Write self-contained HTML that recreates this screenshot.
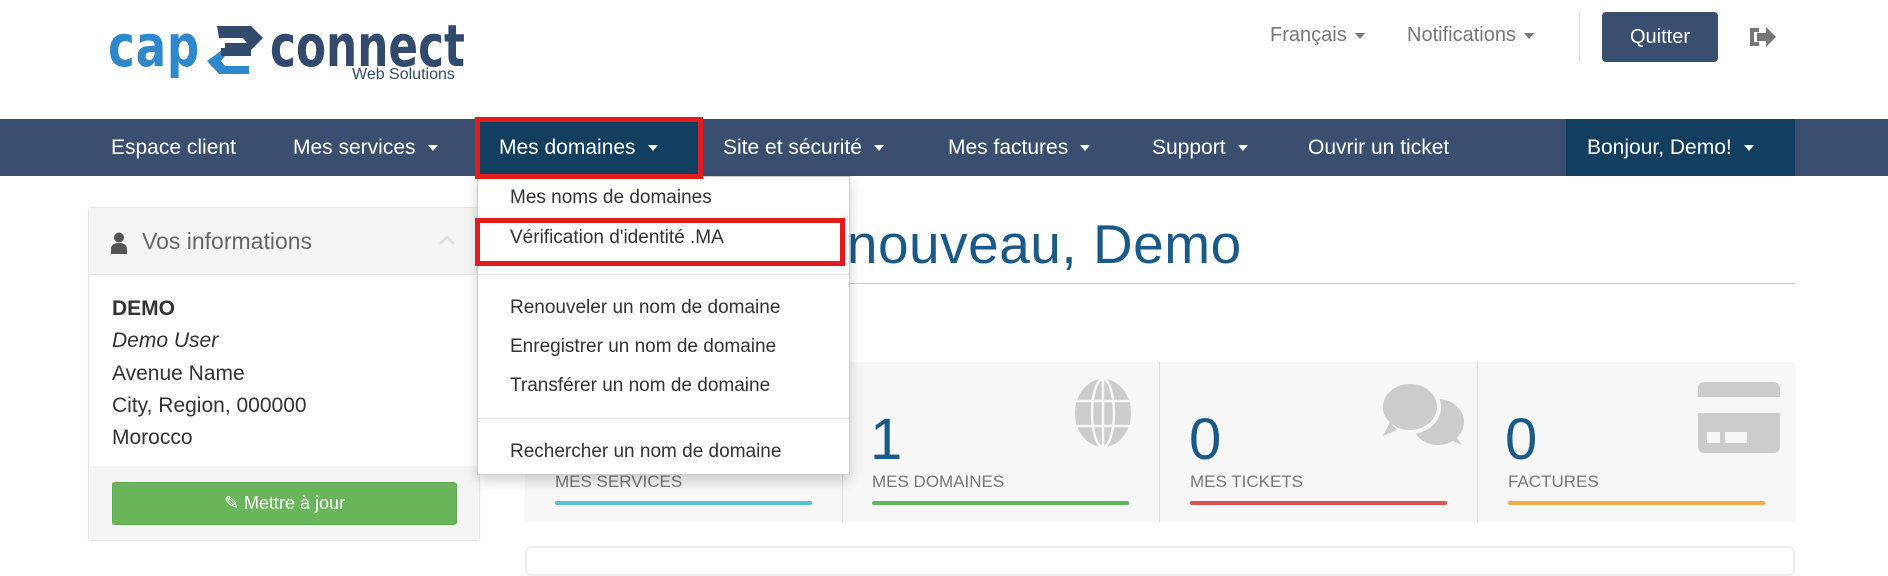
<!DOCTYPE html>
<html><head><meta charset="utf-8"><style>
*{margin:0;padding:0;box-sizing:border-box}
body{width:1888px;height:561px;overflow:hidden;background:#fff;font-family:"Liberation Sans",sans-serif;position:relative}
.a{position:absolute;white-space:nowrap}
.nav{position:absolute;left:0;top:119px;width:1888px;height:57px;background:#3a4e6f}
.ni{position:absolute;top:0;height:57px;line-height:57px;color:#fff;font-size:21px}
.car{display:inline-block;width:0;height:0;border-left:5px solid transparent;border-right:5px solid transparent;border-top:6px solid #fff;vertical-align:middle;margin-left:12px}
.dd{position:absolute;left:477px;top:176px;width:373px;height:299px;background:#fff;border:1px solid #ccc;box-shadow:0 6px 12px rgba(0,0,0,.18);z-index:5}
.dd div{position:absolute;left:32px;font-size:19px;color:#333;white-space:nowrap}
.lab{position:absolute;top:472px;font-size:17px;color:#777}
.bar{position:absolute;top:501px;height:4px;width:257px;border-radius:2px}
.num{position:absolute;top:411px;font-size:58px;color:#1a5a8a;line-height:1}
</style></head><body>
<!-- logo -->
<div class="a" style="left:108px;top:12px;font-size:58px;font-weight:bold;color:#2f88cc;letter-spacing:1px;font-family:'DejaVu Sans',sans-serif;transform:scaleX(0.78);transform-origin:left">cap</div>
<svg class="a" style="left:203px;top:24px" width="60" height="55" viewBox="0 0 60 55"><path d="M14 2h34l12 12-12 12H22v-7h22l-4-5H16z" fill="#324a6e"/><path d="M22 24h26v8H22l-4 5 4 5h24v8H16L4 37z" fill="#2f88cc"/><path d="M18 24h30v8H18z" fill="#324a6e"/></svg>
<div class="a" style="left:270px;top:12px;font-size:58px;font-weight:bold;color:#324a6e;font-family:'DejaVu Sans',sans-serif;transform:scaleX(0.755);transform-origin:left">connect</div>
<div class="a" style="left:352px;top:66px;font-size:16px;color:#324a6e">Web Solutions</div>
<!-- top right -->
<div class="a" style="left:1270px;top:24px;font-size:20px;color:#777">Français<span class="car" style="border-top-color:#777;margin-left:8px"></span></div>
<div class="a" style="left:1407px;top:24px;font-size:20px;color:#777">Notifications<span class="car" style="border-top-color:#777;margin-left:8px"></span></div>
<div class="a" style="left:1579px;top:12px;width:1px;height:50px;background:#ddd"></div>
<div class="a" style="left:1602px;top:12px;width:116px;height:50px;background:#3a4e6f;border-radius:4px;color:#fff;font-size:20px;line-height:50px;text-align:center">Quitter</div>
<svg class="a" style="left:1748px;top:25px" width="30" height="24" viewBox="0 0 30 24"><path d="M2 3h9v4H6v10h5v4H2z" fill="#777"/><path d="M9 8h9V2l10 10-10 10v-6H9z" fill="#777"/></svg>
<!-- nav -->
<div class="nav">
<div class="ni" style="left:111px">Espace client</div>
<div class="ni" style="left:293px">Mes services<span class="car"></span></div>
<div class="ni" style="left:479px;width:221px;background:#123f60"></div>
<div class="ni" style="left:499px">Mes domaines<span class="car"></span></div>
<div class="ni" style="left:723px">Site et sécurité<span class="car"></span></div>
<div class="ni" style="left:948px">Mes factures<span class="car"></span></div>
<div class="ni" style="left:1152px">Support<span class="car"></span></div>
<div class="ni" style="left:1308px">Ouvrir un ticket</div>
<div class="ni" style="left:1566px;width:229px;background:#123f60"></div>
<div class="ni" style="left:1587px">Bonjour, Demo!<span class="car"></span></div>
</div>
<div class="a" style="left:475px;top:117px;width:228px;height:62px;border:5px solid #e31b1b;z-index:6"></div>
<!-- left panel -->
<div class="a" style="left:88px;top:207px;width:392px;height:334px;background:#fff;border:1px solid #e6e6e6;border-radius:3px;box-shadow:0 1px 2px rgba(0,0,0,.05)">
<div style="height:67px;background:#f5f5f5;border-bottom:1px solid #e6e6e6"></div>
<div style="position:absolute;left:0;right:0;bottom:0;height:74px;background:#f5f5f5"></div>
</div>
<svg class="a" style="left:111px;top:232px" width="16" height="22" viewBox="0 0 16 22"><circle cx="8" cy="5.5" r="5" fill="#555"/><path d="M0 22v-5c0-4 3-6 8-6s8 2 8 6v5z" fill="#555"/></svg>
<div class="a" style="left:142px;top:228px;font-size:23px;color:#666">Vos informations</div>
<svg class="a" style="left:438px;top:234px" width="18" height="11" viewBox="0 0 18 11"><path d="M2 10l7-7 7 7" fill="none" stroke="#ddd" stroke-width="2.5"/></svg>
<div class="a" style="left:112px;top:293px;font-size:21px;line-height:32.3px;color:#333">
<b>DEMO</b><br><i>Demo User</i><br>Avenue Name<br>City, Region, 000000<br>Morocco</div>
<div class="a" style="left:112px;top:482px;width:345px;height:43px;background:#68b55a;border:1px solid #5ea950;border-radius:3px;color:#fff;font-size:18px;line-height:41px;text-align:center">✎ Mettre à jour</div>
<!-- title -->
<div class="a" style="left:800px;top:212px;font-size:55px;color:#1a5a8a;letter-spacing:0.5px">à nouveau, Demo</div>
<div class="a" style="left:525px;top:283px;width:1270px;height:1px;background:#ccc"></div>
<!-- stats -->
<div class="a" style="left:525px;top:362px;width:1270px;height:160px;background:#f7f7f7"></div>
<div class="a" style="left:842px;top:362px;width:1px;height:160px;background:#ddd"></div>
<div class="a" style="left:1159px;top:362px;width:1px;height:160px;background:#ddd"></div>
<div class="a" style="left:1477px;top:362px;width:1px;height:160px;background:#ddd"></div>
<div class="num" style="left:870px">1</div>
<div class="num" style="left:1189px">0</div>
<div class="num" style="left:1505px">0</div>
<div class="lab" style="left:555px">MES SERVICES</div>
<div class="lab" style="left:872px">MES DOMAINES</div>
<div class="lab" style="left:1190px">MES TICKETS</div>
<div class="lab" style="left:1508px">FACTURES</div>
<div class="bar" style="left:555px;background:#5bc0de"></div>
<div class="bar" style="left:872px;background:#5cb85c"></div>
<div class="bar" style="left:1190px;background:#d9534f"></div>
<div class="bar" style="left:1508px;background:#f0ad4e"></div>
<svg class="a" style="left:1075px;top:379px" width="56" height="68" viewBox="0 0 56 68"><ellipse cx="28" cy="34" rx="28" ry="34" fill="#ccc"/><g stroke="#f7f7f7" stroke-width="2.5" fill="none"><ellipse cx="28" cy="34" rx="11" ry="34"/><line x1="28" y1="0" x2="28" y2="68"/><line x1="0" y1="22" x2="56" y2="22"/><line x1="0" y1="47" x2="56" y2="47"/></g></svg>
<svg class="a" style="left:1380px;top:382px" width="87" height="64" viewBox="0 0 87 64"><ellipse cx="58" cy="40" rx="26" ry="23" fill="#ccc"/><path d="M74 52l8 11-14-6z" fill="#ccc"/><ellipse cx="30" cy="25" rx="29" ry="25" stroke="#f7f7f7" stroke-width="4" fill="#ccc"/><path d="M10 40l-7 14 14-6z" fill="#ccc"/></svg>
<svg class="a" style="left:1698px;top:382px" width="82" height="71" viewBox="0 0 82 71"><path d="M0 6a6 6 0 0 1 6-6h70a6 6 0 0 1 6 6v9H0z" fill="#ccc"/><path d="M0 31h82v34a6 6 0 0 1-6 6H6a6 6 0 0 1-6-6z" fill="#ccc"/><rect x="9" y="50" width="13" height="11" fill="#f7f7f7"/><rect x="27" y="50" width="22" height="11" fill="#f7f7f7"/></svg>
<div class="a" style="left:525px;top:546px;width:1270px;height:30px;border:2px solid #eee;border-radius:6px"></div>
<!-- dropdown -->
<div class="dd">
<div style="top:10px">Mes noms de domaines</div>
<div style="top:50px">Vérification d'identité .MA</div>
<div style="left:0;top:97px;width:100%;height:1px;background:#e5e5e5"></div>
<div style="top:120px">Renouveler un nom de domaine</div>
<div style="top:159px">Enregistrer un nom de domaine</div>
<div style="top:198px">Transférer un nom de domaine</div>
<div style="left:0;top:241px;width:100%;height:1px;background:#e5e5e5"></div>
<div style="top:264px">Rechercher un nom de domaine</div>
</div>
<div class="a" style="left:475px;top:218px;width:370px;height:48px;border:5px solid #e31b1b;z-index:6"></div>
</body></html>
